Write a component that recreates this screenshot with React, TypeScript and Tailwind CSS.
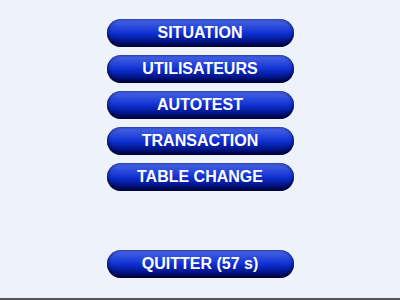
import React from "react";

const Btn = ({ label }: { label: string }) => (
  <button
    type="button"
    className="w-[187px] h-[28px] rounded-full bg-gradient-to-b from-[#4a64e4] via-[#1030d4] to-[#000458] text-white font-bold text-[16px] leading-none flex items-center justify-center shadow-[inset_0_-2px_4px_rgba(0,0,30,0.7),inset_0_0_3px_rgba(0,0,60,0.6)]"
    style={{ fontFamily: '"Liberation Sans", Arial, sans-serif' }}
  >
    {label}
  </button>
);

export default function App() {
  const items = ["SITUATION", "UTILISATEURS", "AUTOTEST", "TRANSACTION", "TABLE CHANGE"];
  return (
    <div className="w-[400px] h-[300px] bg-[#eef2fa] border-b-2 border-[#555555] flex flex-col items-center pt-[19px]">
      <div className="flex flex-col gap-[8px]">
        {items.map((t) => (
          <Btn key={t} label={t} />
        ))}
      </div>
      <div className="mt-[59px]">
        <Btn label="QUITTER (57 s)" />
      </div>
    </div>
  );
}
